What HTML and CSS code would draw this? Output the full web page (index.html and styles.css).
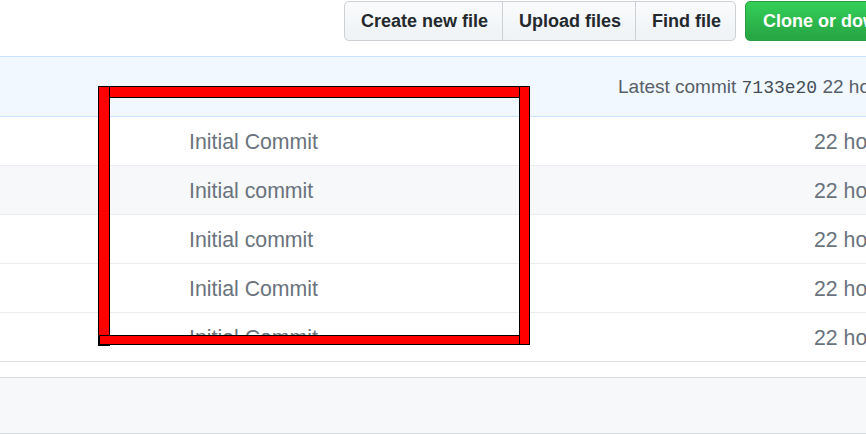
FILE: index.html
```html
<!DOCTYPE html>
<html>
<head>
<meta charset="utf-8">
<link rel="stylesheet" href="styles.css">
</head>
<body>
<div class="page">
  <div class="file-nav">
    <div class="btn-group">
      <button class="btn">Create new file</button>
      <button class="btn">Upload files</button>
      <button class="btn">Find file</button>
    </div>
    <button class="btn btn-primary">Clone or download ▾</button>
  </div>

  <div class="commit-tease">
    <span class="latest">Latest commit <code class="sha">7133e20</code> 22 hours ago</span>
  </div>

  <div class="files">
    <div class="row"><span class="msg">Initial Commit</span><span class="age">22 hours ago</span></div>
    <div class="row alt"><span class="msg">Initial commit</span><span class="age">22 hours ago</span></div>
    <div class="row"><span class="msg">Initial commit</span><span class="age">22 hours ago</span></div>
    <div class="row"><span class="msg">Initial Commit</span><span class="age">22 hours ago</span></div>
    <div class="row"><span class="msg">Initial Commit</span><span class="age">22 hours ago</span></div>
  </div>

  <div class="spacer"></div>
  <div class="readme-bar"></div>
</div>

<div class="highlight">
  <div class="bar bar-top"></div>
  <div class="bar bar-left"></div>
  <div class="bar bar-bottom"></div>
  <div class="bar bar-right"></div>
</div>
</body>
</html>
```

FILE: styles.css
```css
html, body {
  margin: 0;
  padding: 0;
  overflow: hidden;
  background: #fff;
}

body {
  width: 866px;
  height: 434px;
  position: relative;
  font-family: "Liberation Sans", Arial, sans-serif;
}

.page {
  width: 1100px;
}

.file-nav {
  display: flex;
  align-items: stretch;
  gap: 9px;
  padding-left: 344px;
  padding-top: 1px;
  height: 40px;
}

.btn-group {
  display: flex;
}

.btn {
  font-family: "Liberation Sans", Arial, sans-serif;
  font-size: 18px;
  font-weight: bold;
  color: #24292e;
  background: linear-gradient(#fafbfc, #eff3f6 90%);
  border: 1px solid #cdd1d6;
  padding: 0 14px 0 16px;
  height: 40px;
  line-height: 38px;
  margin: 0;
  white-space: nowrap;
}

.btn-group .btn {
  border-radius: 0;
  margin-left: -1px;
}

.btn-group .btn:first-child {
  margin-left: 0;
  border-radius: 5px 0 0 5px;
}

.btn-group .btn:last-child {
  border-radius: 0 5px 5px 0;
}

.btn-primary {
  color: #fff;
  background: linear-gradient(#34d058, #28a745 90%);
  border-color: #2a9a45;
  border-radius: 5px;
  padding-left: 17px;
}

.commit-tease {
  margin-top: 15px;
  height: 59px;
  background: #f1f8ff;
  border-top: 1px solid #c8e1ff;
  border-bottom: 1px solid #c8e1ff;
  display: flex;
  align-items: center;
  padding-left: 618px;
  font-size: 19px;
  color: #586069;
}

.latest {
  white-space: nowrap;
}

.sha {
  font-family: "Liberation Mono", "Courier New", monospace;
  font-size: 18px;
  color: #444d56;
}

.row {
  display: grid;
  grid-template-columns: 189px 625px 1fr;
  align-items: center;
  height: 46px;
  padding-top: 2px;
  border-bottom: 1px solid #eaecef;
  font-size: 21.3px;
  color: #6a737d;
}

.row.alt {
  background: #f6f8fa;
}

.row:last-child {
  border-bottom-color: #dfe2e5;
}

.msg {
  grid-column: 2;
  white-space: nowrap;
}

.age {
  grid-column: 3;
  white-space: nowrap;
}

.spacer {
  height: 15px;
}

.readme-bar {
  height: 55px;
  background: #f6f8fa;
  border-top: 1px solid #d8dbde;
  border-bottom: 1px solid #d8dbde;
}

/* annotation overlay */
.highlight {
  position: absolute;
  left: 0;
  top: 0;
  width: 866px;
  height: 434px;
  pointer-events: none;
}

.bar {
  position: absolute;
  box-sizing: border-box;
  background: #ff0000;
  border: 1px solid #000;
}

.bar-top {
  left: 98px;
  top: 86px;
  width: 432px;
  height: 12px;
}

.bar-left {
  left: 98px;
  top: 86px;
  width: 12px;
  height: 260px;
}

.bar-bottom {
  left: 99px;
  top: 335px;
  width: 430px;
  height: 10px;
}

.bar-right {
  left: 519px;
  top: 86px;
  width: 11px;
  height: 259px;
}
```
